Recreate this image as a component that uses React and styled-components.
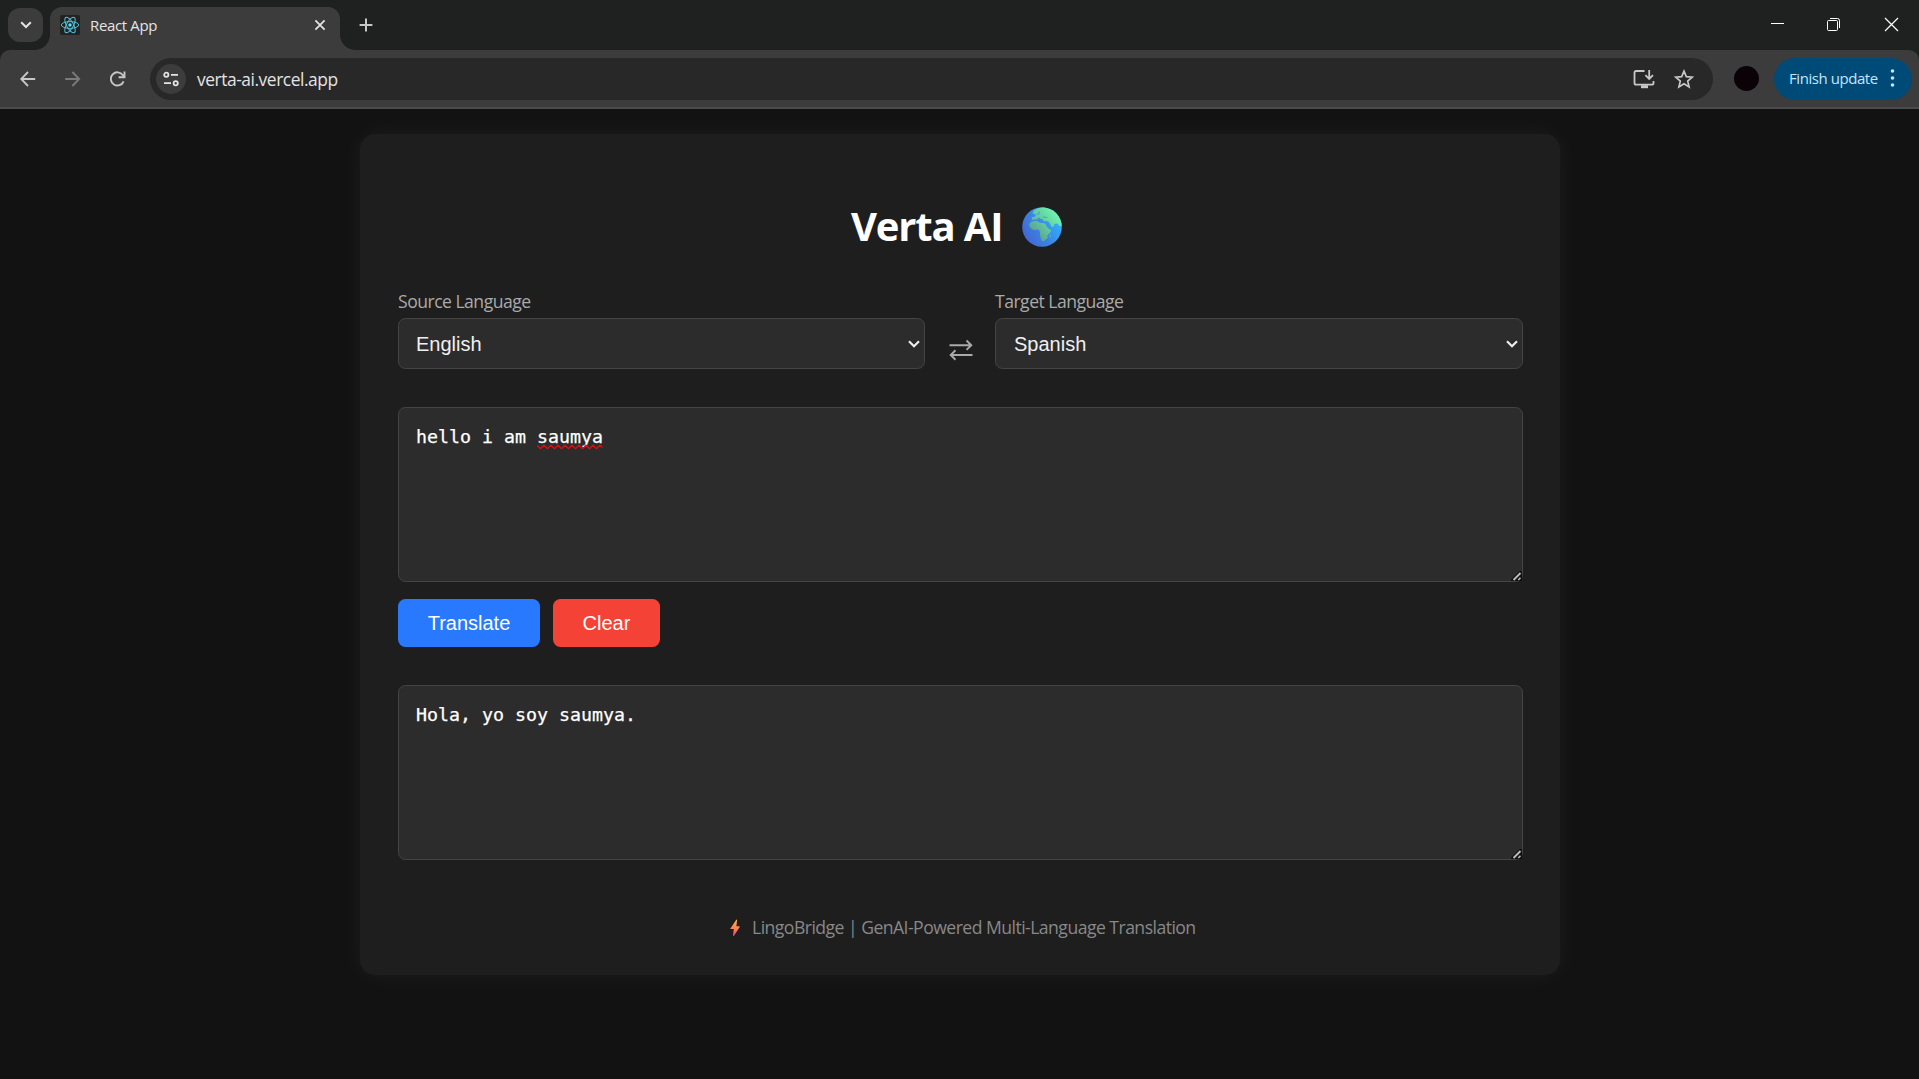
import React from "react";
import styled, { createGlobalStyle } from "styled-components";

const Global = createGlobalStyle`
  * { box-sizing: border-box; }
  html, body { margin: 0; background: #121212; }
  body { width: 1919px; height: 1079px; overflow: hidden; font-family: "Open Sans", "Noto Sans", sans-serif; color: #fff; }
`;

const Window = styled.div`
  width: 1919px;
  height: 1079px;
  display: flex;
  flex-direction: column;
`;
const TabStrip = styled.header`
  height: 50px;
  flex: none;
  background: #1f2020;
  display: flex;
  padding-left: 8px;
`;
const TabSearch = styled.button`
  width: 35px;
  height: 34px;
  margin-top: 8px;
  padding: 0;
  border: 0;
  border-radius: 12px;
  background: #3c3c3c;
  display: grid;
  place-items: center;
`;
const Tab = styled.div`
  position: relative;
  width: 290px;
  height: 43px;
  margin: 7px 0 0 7px;
  padding: 0 13px 7px 10px;
  border-radius: 12px 12px 0 0;
  background: #3c3c3c;
  display: flex;
  align-items: center;
`;
const TabFlare = styled.i`
  position: absolute;
  bottom: 0;
  ${(p) => (p.$side === "left" ? "left: -15px;" : "right: -15px;")}
  width: 15px;
  height: 15px;
  background: radial-gradient(circle at ${(p) => (p.$side === "left" ? "0 0" : "100% 0")}, transparent 14.5px, #3c3c3c 15.2px);
`;
const Favicon = styled.span`
  width: 20px;
  height: 20px;
  border-radius: 2px;
  background: #222;
  display: grid;
`;
const Label = styled.span`
  font-size: ${(p) => p.$size}px;
  letter-spacing: ${(p) => p.$track || 0}px;
  line-height: 1.36;
  color: ${(p) => p.$color};
  white-space: nowrap;
`;
const TabTitle = styled(Label)`
  flex: 1;
  margin-left: 10px;
`;
const Address = styled(Label)`
  padding-top: 2px;
`;
const NewTab = styled.span`
  margin: 18px 0 0 19px;
  height: 14px;
  & > svg { display: block; }
`;
const WindowControls = styled.div`
  margin-left: auto;
  padding: 17px 20px 0 0;
  display: flex;
  gap: 42px;
`;
const Toolbar = styled.nav`
  height: 59px;
  flex: none;
  background: linear-gradient(#1f2020, #1f2020) 0 0 / 100% 12px no-repeat;
`;
const ToolbarFace = styled.div`
  height: 59px;
  border-radius: 10px 10px 0 0;
  border-bottom: 2px solid #4a4a4a;
  background: #3c3c3c;
  display: flex;
  align-items: center;
  padding: 2px 7px 1px 20px;
`;
const NavIcons = styled.div`
  display: flex;
  gap: 29px;
  width: 130px;
  flex: none;
`;
const AddressBar = styled.div`
  flex: 1;
  height: 42px;
  border-radius: 21px;
  background: #282828;
  display: flex;
  align-items: center;
  padding: 0 19px 0 6px;
`;
const SiteInfo = styled.span`
  width: 30px;
  height: 30px;
  border-radius: 50%;
  background: #3c3c3c;
  display: grid;
  place-items: center;
  margin-right: 11px;
`;
const AddressActions = styled.div`
  margin-left: auto;
  display: flex;
  gap: 19px;
`;
const Avatar = styled.span`
  width: 25px;
  height: 25px;
  margin: 0 15px 2px 21px;
  border-radius: 50%;
  background: #0b0208;
`;
const UpdateButton = styled.button`
  width: 138px;
  height: 42px;
  margin-bottom: 1px;
  border: 0;
  border-radius: 21px;
  background: #004a77;
  padding: 0 17px 1px 15px;
  display: flex;
  align-items: center;
  justify-content: space-between;
  font-family: inherit;
`;

const Card = styled.main`
  width: 1200px;
  height: 841px;
  margin: 25px 0 0 360px;
  padding: 62px 37px 0 38px;
  border-radius: 15px;
  background: #1e1e1e;
  box-shadow: 0 0 25px rgba(255, 255, 255, 0.05);
  display: flex;
  flex-direction: column;
`;
const Heading = styled.h1`
  margin: 0 0 34px;
  height: 62px;
  padding: 0 0 0 453px;
  display: flex;
  align-items: center;
  gap: 21px;
  font-size: 40px;
  font-weight: 700;
  letter-spacing: -1.15px;
  white-space: nowrap;
  & > span { width: 150px; padding-bottom: 4px; }
`;
const Languages = styled.section`
  display: flex;
  height: 77px;
  margin-bottom: 38px;
`;
const LanguageField = styled.div`
  width: ${(p) => p.$width}px;
  display: flex;
  flex-direction: column;
  justify-content: space-between;
`;
const FieldLabel = styled(Label)`
  line-height: 18px;
`;
const Select = styled.div`
  height: 51px;
  border: 1px solid #444;
  border-radius: 7.5px;
  background: #2c2c2c;
  display: flex;
  align-items: center;
  justify-content: space-between;
  padding: 0 3px 0 17px;
  font: 20px "Liberation Sans", Arial, sans-serif;
  color: #f0f0f0;
  & > span { padding: 2px 0 0 ${(p) => p.$nudge || 0}px; }
`;
const Swap = styled.div`
  width: 70px;
  padding: 47px 0 0 23.5px;
`;
const TextBox = styled.div`
  position: relative;
  height: 175px;
  flex: none;
  border: 1px solid #444;
  border-radius: 7.5px;
  background: #2c2c2c;
  padding: 17px;
  font: 18.27px/24px "DejaVu Sans Mono", monospace;
  -webkit-text-stroke: 0.25px #fff;
  color: #fff;
`;
const Misspelled = styled.span`
  position: relative;
  & > svg { position: absolute; left: 0; top: 18px; }
`;
const Grip = styled.svg`
  position: absolute;
  right: 0;
  bottom: 0;
`;
const Actions = styled.div`
  display: flex;
  gap: 13px;
  margin: 17px 0 38px;
`;
const Button = styled.button`
  width: ${(p) => p.$width}px;
  height: 48px;
  border: 0;
  border-radius: 7.5px;
  background: ${(p) => p.$fill};
  padding: 1px 0 0;
  color: #fff;
  font: 20px "Liberation Sans", Arial, sans-serif;
`;
const Footer = styled.footer`
  display: flex;
  align-items: center;
  height: 26px;
  margin-top: 55px;
  padding-left: 332px;
  gap: 12px;
`;

const Chevron = () => (
  <svg width="14" height="10" viewBox="0 0 14 10" fill="none" stroke="#eee" strokeWidth="2.2"><path d="M2 2.2l5 5 5-5" /></svg>
);
const ResizeGrip = () => (
  <Grip width="11" height="10" viewBox="0 0 11 10">
    <path d="M0 8.5L8.5 0H11v10H0z" fill="#111" />
    <path d="M2.5 9L9.5 2" stroke="#bbb" strokeWidth="2" />
    <path d="M7.3 9L9.5 6.8" stroke="#bbb" strokeWidth="1.6" />
  </Grip>
);
const ReactLogo = () => (
  <svg width="20" height="20" viewBox="-10 -10 20 20" fill="none" stroke="#53bdd6" strokeWidth="1">
    <circle r="1.7" fill="#61dafb" stroke="none" />
    {[0, 60, 120].map((a) => <ellipse key={a} rx="8.7" ry="3.4" transform={`rotate(${a})`} />)}
  </svg>
);
const Globe = () => (
  <svg width="40" height="40" viewBox="0 0 40 40">
    <defs>
      <linearGradient id="sea" x1="0.1" y1="0.8" x2="0.9" y2="0.3"><stop offset="0" stopColor="#4468cf" /><stop offset="0.5" stopColor="#3a86e8" /><stop offset="1" stopColor="#2fb2ff" /></linearGradient>
      <linearGradient id="land" x1="0.1" y1="0.8" x2="0.9" y2="0.1"><stop offset="0" stopColor="#5a9c94" /><stop offset="0.5" stopColor="#64cfa0" /><stop offset="1" stopColor="#74fbb0" /></linearGradient>
      <clipPath id="disc"><circle cx="20" cy="20" r="19.8" /></clipPath>
    </defs>
    <g clipPath="url(#disc)">
      <rect width="40" height="40" fill="url(#sea)" />
      <path fill="url(#land)" d="M7 17l2.6-2.4 5.4-.9 2.2 1.8 3 .6 3 .4 1.6 3.2 2.6 2.9 2 .3-1.6 3.2-2.6 2.5.4 2.6-2.2 1.3-1.4 1.8-2.2-.2-1.5-4.3-.4-5-1.4-2.3-5 .4-3.6-2.3zM9.7 12.8l.2-2.8 3-.2 1-2-3.4-1.2 1.2-3.2L16.7 1l5.7-1L34 4l6 8v7l-2.4 0-2.2-2.4-2.8.2-1 2.6-1.8.6-2.3-3.9-1.4-1.8-4.7-.2-.8-2.2-2.5-.1-1.2-1.5-1.5 2-3.5.5zM28.5 27.2l.7 1-1 2-.8-.2z" />
      <path d="M17.5 4.3l-.7 2.6-2 .3M21 10l4.3.5" stroke="#3aa5e6" strokeWidth="1.2" fill="none" />
    </g>
  </svg>
);
const Bolt = () => (
  <svg width="10" height="18" viewBox="0 0 10 18">
    <defs><linearGradient id="bolt" x1="0" y1="0" x2="0" y2="1"><stop offset="0" stopColor="#ffb54a" /><stop offset="0.55" stopColor="#ff8150" /><stop offset="1" stopColor="#f2407a" /></linearGradient></defs>
    <path d="M6.3.8L.4 9.4q-.3.7.4.7h3L3 16.5q.2 1 1 .3L9.7 8q.2-.8-.5-.8H6.4L7.1 1Q7 .2 6.3.8z" fill="url(#bolt)" />
  </svg>
);

export default function App() {
  return (
    <Window>
      <Global />
      <TabStrip>
        <TabSearch><svg width="12" height="8" viewBox="0 0 12 8" fill="none" stroke="#e3e3e3" strokeWidth="2"><path d="M1.2 1.2L6 6l4.8-4.8" /></svg></TabSearch>
        <Tab>
          <TabFlare $side="left" /><TabFlare $side="right" />
          <Favicon><ReactLogo /></Favicon>
          <TabTitle $size={15} $track={-0.36} $color="#e3e3e3">React App</TabTitle>
          <svg width="14" height="14" viewBox="0 0 14 14" stroke="#e3e3e3" strokeWidth="1.8"><path d="M2.4 2.4l9.2 9.2M11.6 2.4l-9.2 9.2" /></svg>
        </Tab>
        <NewTab><svg width="14" height="14" viewBox="0 0 14 14" stroke="#c7c7c7" strokeWidth="2"><path d="M7 .6v12.8M.6 7h12.8" /></svg></NewTab>
        <WindowControls>
          <svg width="15" height="15" viewBox="0 0 15 15"><path d="M1 6.5h13" stroke="#fff" /></svg>
          <svg width="15" height="15" viewBox="0 0 15 15" fill="none" stroke="#fff"><rect x="0.5" y="3.5" width="10" height="10" rx="1" /><path d="M3 1.5h7.5q2 0 2 2V11" /></svg>
          <svg width="15" height="15" viewBox="0 0 15 15" stroke="#fff" strokeWidth="1.2"><path d="M1 1l13 13M14 1L1 14" /></svg>
        </WindowControls>
      </TabStrip>
      <Toolbar>
        <ToolbarFace>
          <NavIcons>
            <svg width="16" height="16" viewBox="0 0 16 16" fill="none" stroke="#c7c7c7" strokeWidth="1.8"><path d="M15.2 8H1.5M8 1L1.2 8 8 15" /></svg>
            <svg width="16" height="16" viewBox="0.6 0 16 16" fill="none" stroke="#7b7b7b" strokeWidth="1.8"><path d="M.8 8h13.7M8 1l6.8 7L8 15" /></svg>
            <svg width="16" height="16" viewBox="0.4 0 16 16" fill="none" stroke="#c7c7c7" strokeWidth="1.9"><path d="M14 10.3A6.6 6.6 0 1 1 13.3 4.2L15 6M14.9.5v5.8H9" /></svg>
          </NavIcons>
          <AddressBar>
            <SiteInfo>
              <svg width="16" height="16" viewBox="0 0 16 16" fill="none" stroke="#e3e3e3" strokeWidth="1.8"><circle cx="3.3" cy="3.8" r="2.1" /><path d="M8 3.8h7M1 12.2h7" /><circle cx="12.7" cy="12.2" r="2.1" /></svg>
            </SiteInfo>
            <Address $size={17.4} $track={-0.45} $color="#e3e3e3">verta-ai.vercel.app</Address>
            <AddressActions>
              <svg width="22" height="20" viewBox="0 0 22 20" fill="none" stroke="#c7c7c7" strokeWidth="1.8"><path d="M11.5 2H3.2Q1.5 2 1.5 3.7v10.2q0 1.7 1.7 1.7h15.6q1.7 0 1.7-1.7V12M16.2 1v8.5M12.4 6.2l3.8 3.8L20 6.2" /><path d="M8 17.7h7" strokeWidth="3" /></svg>
              <svg width="20" height="20" viewBox="0 0 20 20" fill="none" stroke="#c7c7c7" strokeWidth="1.7"><path d="M10 2.2l2.3 5.5 6 .5-4.6 3.9 1.4 5.8L10 14.8l-5.1 3.1 1.4-5.8-4.6-3.9 6-.5z" /></svg>
            </AddressActions>
          </AddressBar>
          <Avatar />
          <UpdateButton>
            <Label $size={15} $track={-0.44} $color="#c2e7ff">Finish update</Label>
            <svg width="5" height="18" viewBox="0 0 5 18" fill="#c2e7ff"><circle cx="2.5" cy="2" r="1.8" /><circle cx="2.5" cy="9" r="1.8" /><circle cx="2.5" cy="16" r="1.8" /></svg>
          </UpdateButton>
        </ToolbarFace>
      </Toolbar>
      <Card>
        <Heading><span>Verta AI</span><Globe /></Heading>
        <Languages>
          <LanguageField $width={527}>
            <FieldLabel $size={17.6} $track={-0.52} $color="#aaa">Source Language</FieldLabel>
            <Select><span>English</span><Chevron /></Select>
          </LanguageField>
          <Swap>
            <svg width="24" height="22" viewBox="0 0 24 22" fill="none" stroke="#aaa" strokeWidth="1.9"><path d="M.5 6.2h21.5M17.5 1.5l4.8 4.7-4.8 4.7M23.5 16H2M6.5 11.3L1.7 16l4.8 4.7" /></svg>
          </Swap>
          <LanguageField $width={528}>
            <FieldLabel $size={17.6} $track={-0.52} $color="#aaa">Target Language</FieldLabel>
            <Select $nudge={1}><span>Spanish</span><Chevron /></Select>
          </LanguageField>
        </Languages>
        <TextBox>
          hello i am <Misspelled>saumya<svg width="66" height="6" viewBox="0 0 66 6" fill="none" stroke="#e0100f" strokeWidth="1.2"><path d="M0 1.2l3.5 3.4L7 1.2l3.5 3.4L14 1.2l3.5 3.4L21 1.2l3.5 3.4L28 1.2l3.5 3.4L35 1.2l3.5 3.4L42 1.2l3.5 3.4L49 1.2l3.5 3.4L56 1.2l3.5 3.4L63 1.2l2.5 2.5" /></svg></Misspelled>
          <ResizeGrip />
        </TextBox>
        <Actions>
          <Button $width={142} $fill="#2979ff">Translate</Button>
          <Button $width={107} $fill="#f44336">Clear</Button>
        </Actions>
        <TextBox>Hola, yo soy saumya.<ResizeGrip /></TextBox>
        <Footer>
          <Bolt />
          <Label $size={17.6} $track={-0.53} $color="#888">LingoBridge | GenAI-Powered Multi-Language Translation</Label>
        </Footer>
      </Card>
    </Window>
  );
}
